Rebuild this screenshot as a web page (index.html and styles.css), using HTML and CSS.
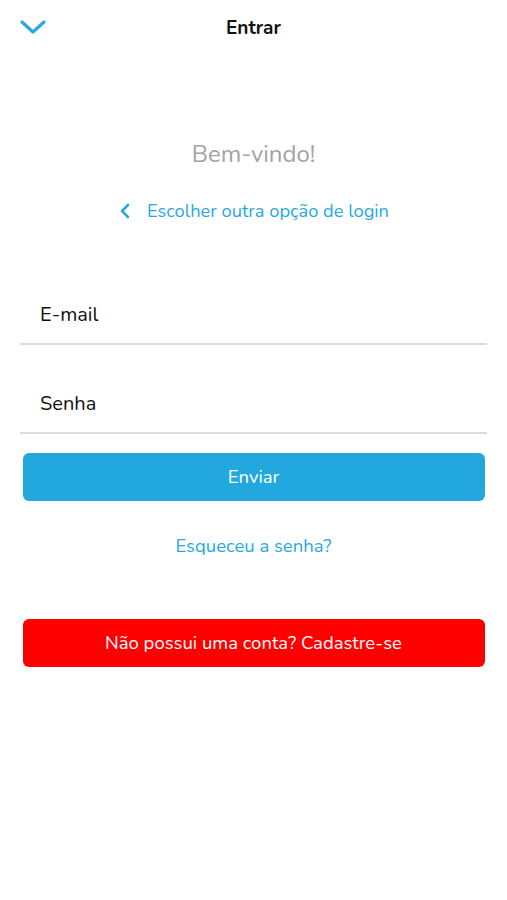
FILE: index.html
```html
<!DOCTYPE html>
<html lang="pt-BR">
<head>
  <meta charset="UTF-8" />
  <meta name="viewport" content="width=device-width, initial-scale=1.0"/>
  <title>Entrar</title>
  <link rel="stylesheet" href="styles.css">
</head>
<body>

  <header class="top-bar">
    <button class="close-btn" aria-label="Fechar">
      <svg width="26" height="14" viewBox="0 0 26 14">
        <polyline points="2,2 13,12 24,2" fill="none" stroke="#29a8e0" stroke-width="3.2" stroke-linecap="round" stroke-linejoin="round"/>
      </svg>
    </button>
    <h1 class="title">Entrar</h1>
  </header>

  <main class="login">
    <p class="welcome">Bem-vindo!</p>

    <a class="other-login" href="#">
      <svg width="10" height="16" viewBox="0 0 10 16">
        <polyline points="8,2 2,8 8,14" fill="none" stroke="#29a8e0" stroke-width="2.6" stroke-linecap="round" stroke-linejoin="round"/>
      </svg>
      <span>Escolher outra opção de login</span>
    </a>

    <form class="login-form">
      <label class="field">
        <input type="email" placeholder="E-mail">
      </label>
      <label class="field">
        <input type="password" placeholder="Senha">
      </label>
      <button type="button" class="btn btn-send">Enviar</button>
    </form>

    <a class="forgot" href="#">Esqueceu a senha?</a>

    <button type="button" class="btn btn-signup">Não possui uma conta? Cadastre-se</button>
  </main>

</body>
</html>
```

FILE: styles.css
```css
body {
  margin: 0;
  background: #fff;
  font-family: 'Nunito', Lato, 'Noto Sans', sans-serif;
  color: #111;
}

.top-bar {
  position: relative;
  height: 56px;
  display: flex;
  align-items: center;
  justify-content: center;
}

.close-btn {
  position: absolute;
  left: 20px;
  top: 20px;
  padding: 0;
  border: none;
  background: none;
  line-height: 0;
}

.title {
  margin: 0;
  font-size: 19px;
  font-weight: bold;
  color: #111;
}

.login {
  display: flex;
  flex-direction: column;
  align-items: center;
}

.welcome {
  margin: 83px 0 0;
  font-size: 24px;
  color: #a3a3a3;
  line-height: 30px;
}

.other-login {
  margin-top: 30px;
  margin-left: 2px;
  display: flex;
  align-items: center;
  gap: 17px;
  font-size: 18.3px;
  color: #29a8e0;
  text-decoration: none;
}

.login-form {
  width: 467px;
  margin-top: 32px;
  display: flex;
  flex-direction: column;
  align-items: center;
}

.field {
  display: block;
  width: 100%;
  padding-top: 32px;
  border-bottom: 2px solid #dcdcdc;
}

.field + .field {
  padding-top: 31px;
}

.field input {
  display: block;
  width: 100%;
  box-sizing: border-box;
  height: 56px;
  padding: 0 20px 1px;
  border: none;
  outline: none;
  font-family: inherit;
  font-size: 20px;
  color: #111;
  background: transparent;
}

.field input::placeholder {
  color: #111;
}

.btn {
  width: 462px;
  height: 48px;
  border: none;
  border-radius: 6px;
  font-family: inherit;
  font-size: 18.5px;
  color: #fff;
  cursor: pointer;
}

.btn-send {
  margin-top: 19px;
  background: #22a8df;
}

.forgot {
  margin-top: 32px;
  font-size: 18.5px;
  color: #29a8e0;
  text-decoration: none;
}

.btn-signup {
  margin-top: 60px;
  background: #ff0000;
}
```
